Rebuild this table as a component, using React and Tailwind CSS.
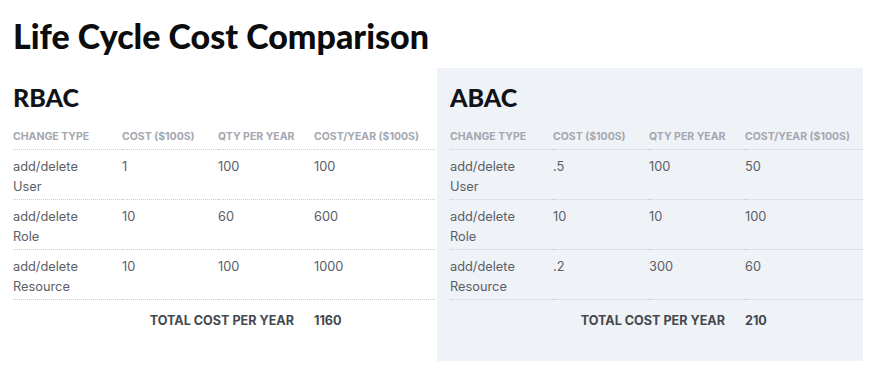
const rbac = [
  { type: "User", cost: "1", qty: "100", year: "100" },
  { type: "Role", cost: "10", qty: "60", year: "600" },
  { type: "Resource", cost: "10", qty: "100", year: "1000" },
];

const abac = [
  { type: "User", cost: ".5", qty: "100", year: "50" },
  { type: "Role", cost: "10", qty: "10", year: "100" },
  { type: "Resource", cost: ".2", qty: "300", year: "60" },
];

const headers = ["Change Type", "Cost ($100s)", "Qty per Year", "Cost/Year ($100s)"];

function CostTable({ title, rows, total, cols }) {
  return (
    <div>
      <h2 className="font-['Lato',sans-serif] font-black text-[25px] leading-[32px] text-[#111318]">
        {title}
      </h2>
      <div className={`grid ${cols} mt-[17px] font-['Inter',sans-serif]`}>
        {headers.map((h) => (
          <div
            key={h}
            className="h-[20px] border-b border-dotted border-[#c9cdd3] text-[10.5px] leading-[14px] font-bold uppercase text-[#a3a7af] whitespace-nowrap"
          >
            {h}
          </div>
        ))}
        {rows.map((r) => (
          <div key={r.type} className="contents">
            <div className="h-[50px] border-b border-dotted border-[#c9cdd3] pt-[7px] text-[12.8px] leading-[20px] text-[#5a5e66]">
              add/delete
              <br />
              {r.type}
            </div>
            <div className="h-[50px] border-b border-dotted border-[#c9cdd3] pt-[7px] text-[12.8px] leading-[20px] text-[#5a5e66]">
              {r.cost}
            </div>
            <div className="h-[50px] border-b border-dotted border-[#c9cdd3] pt-[7px] text-[12.8px] leading-[20px] text-[#5a5e66]">
              {r.qty}
            </div>
            <div className="h-[50px] border-b border-dotted border-[#c9cdd3] pt-[7px] text-[12.8px] leading-[20px] text-[#5a5e66]">
              {r.year}
            </div>
          </div>
        ))}
        <div className="col-span-3 pt-[13px] pr-[20px] text-right text-[12.6px] leading-[16px] font-bold uppercase text-[#45484f]">
          Total Cost per Year
        </div>
        <div className="pt-[13px] text-[12.6px] leading-[16px] font-bold text-[#45484f]">{total}</div>
      </div>
    </div>
  );
}

export default function App() {
  return (
    <div className="w-[878px] h-[372px] bg-white overflow-hidden">
      <h1 className="pl-[13px] pt-[16px] font-['Lato',sans-serif] font-black text-[34px] leading-[40px] text-[#0b0c0e]">
        Life Cycle Cost Comparison
      </h1>
      <div className="flex mt-[12px]">
        <div className="w-[437px] pl-[13px] pr-[2px] pt-[13px]">
          <CostTable title="RBAC" rows={rbac} total="1160" cols="grid-cols-[109px_96px_96px_1fr]" />
        </div>
        <div className="w-[426px] h-[293px] bg-[#eff2f7] pl-[13px] pt-[13px]">
          <CostTable title="ABAC" rows={abac} total="210" cols="grid-cols-[103px_96px_96px_1fr]" />
        </div>
      </div>
    </div>
  );
}
